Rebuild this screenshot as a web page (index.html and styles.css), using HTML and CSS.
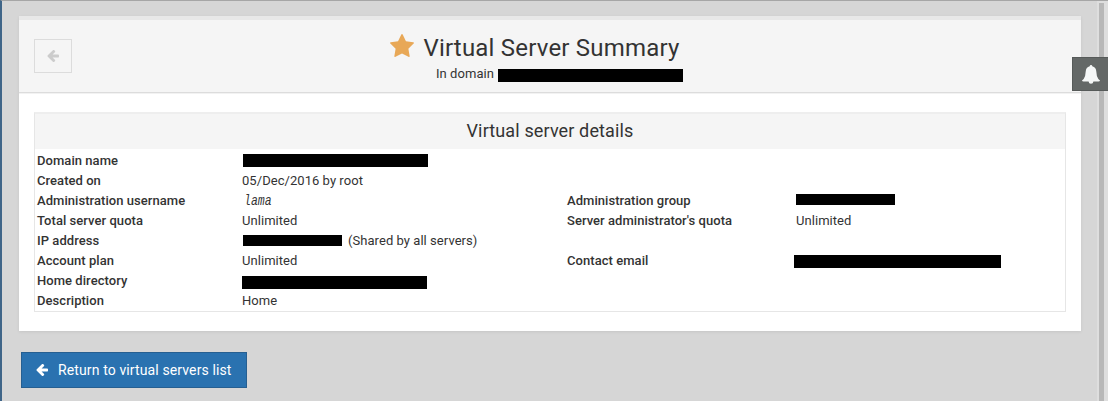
FILE: index.html
```html
<!DOCTYPE html>
<html lang="en">
<head>
<meta charset="utf-8">
<title>Virtual Server Summary</title>
<link rel="stylesheet" href="styles.css">
</head>
<body>
<svg class="defs" width="0" height="0"><symbol id="arrow" viewBox="0 0 1536 1536"><path fill="currentColor" d="M1536 704v128q0 53-32.5 90.5t-84.5 37.5h-704l293 294q38 36 38 90t-38 90l-75 76q-37 37-90 37-52 0-91-37l-651-652q-37-37-37-90 0-52 37-91l651-650q38-38 91-38 52 0 90 38l75 74q38 38 38 91t-38 91l-293 293h704q52 0 84.5 37.5t32.5 90.5z"/></symbol></svg>
<main class="content">
  <section class="panel">
    <header class="panel-head">
      <button class="back" aria-label="Back"><svg class="arrow"><use href="#arrow"/></svg></button>
      <div class="heading">
        <h1><svg class="star" viewBox="64 31 1664 1590" preserveAspectRatio="none"><path fill="#e8a857" d="M1728 647q0 22-26 48l-363 354 86 500q1 7 1 20 0 21-10.5 35.5t-30.5 14.5q-19 0-40-12l-449-236-449 236q-22 12-40 12-21 0-31.5-14.5t-10.5-35.5q0-6 2-20l86-500-364-354q-25-27-25-48 0-37 56-46l502-73 225-455q19-41 49-41t49 41l225 455 502 73q56 9 56 46z"/></svg><span class="title">Virtual Server Summary</span></h1>
        <p class="domain"><span class="domain-label">In domain</span><i class="redacted r-title"></i></p>
      </div>
    </header>
    <div class="details">
      <h2>Virtual server details</h2>
      <dl class="grid">
        <dt>Domain name</dt><dd class="wide"><i class="redacted r-domain"></i></dd>
        <dt>Created on</dt><dd class="wide">05/Dec/2016 by root</dd>
        <dt>Administration username</dt><dd><code>lama</code></dd>
        <dt>Administration group</dt><dd><i class="redacted r-group"></i></dd>
        <dt>Total server quota</dt><dd>Unlimited</dd>
        <dt>Server administrator's quota</dt><dd>Unlimited</dd>
        <dt>IP address</dt><dd class="wide"><i class="redacted r-ip"></i><span class="shared">(Shared by all servers)</span></dd>
        <dt>Account plan</dt><dd>Unlimited</dd>
        <dt>Contact email</dt><dd><i class="redacted r-email"></i></dd>
        <dt>Home directory</dt><dd class="wide"><i class="redacted r-home"></i></dd>
        <dt>Description</dt><dd class="wide">Home</dd>
      </dl>
    </div>
  </section>
  <button class="return"><svg class="arrow"><use href="#arrow"/></svg><span>Return to virtual servers list</span></button>
</main>
<div class="scrollbar"><div class="thumb"></div></div>
<div class="bell"><svg width="18" height="19" viewBox="0 0 18 19"><path fill="#f5f7f7" d="M9 0Q10.2 0 10.3 1.3Q14 2.2 14.3 6.5Q14.5 11.5 16.2 13.7Q17 14.8 18 15.2Q17.8 16.5 16.5 16.5H11.4Q11.2 18.8 9 18.8T6.6 16.5H1.5Q.2 16.5 0 15.2Q1 14.8 1.8 13.7Q3.5 11.5 3.7 6.5Q4 2.2 7.7 1.3Q7.8 0 9 0Z"/></svg></div>
</body>
</html>
```
FILE: styles.css
```css
* { box-sizing: border-box; }
body {
  margin: 0;
  height: 401px;
  overflow: hidden;
  display: flex;
  background: #d6d6d6;
  border-top: 1px solid #a6a6a6;
  border-left: 2px solid #3f6588;
  font-family: Roboto, "Liberation Sans", sans-serif;
  font-size: 13px;
  letter-spacing: .05px;
  color: #333;
}
.defs { position: absolute; }
.content { flex: 1; padding: 15px 16px 0 17px; }
.panel {
  height: 315px;
  background: #fff;
  border-top: 4px solid #e8e8e8;
  box-shadow: 0 1px 3px rgba(0, 0, 0, .08);
}
.panel-head {
  height: 73px;
  display: grid;
  grid-template-columns: 38px 1fr 38px;
  padding: 0 15px;
  background: #f5f5f5;
  border-bottom: 1px solid #dcdcdc;
  box-shadow: 0 1px 0 #f2f2f2;
}
.back {
  width: 38px;
  height: 34px;
  margin-top: 19px;
  padding: 0;
  display: flex;
  align-items: center;
  justify-content: center;
  background: #f5f5f5;
  border: 1px solid #dcdcdc;
  color: #ccc;
}
.arrow { width: 12px; height: 12px; display: block; }
.heading { display: flex; flex-direction: column; align-items: center; }
h1 {
  margin: 14px 0 0;
  height: 28px;
  display: flex;
  align-items: flex-start;
  gap: 9px;
  font-size: 24px;
  line-height: 28px;
  letter-spacing: .2px;
  font-weight: 400;
  padding-right: 30px;
}
.star { width: 24px; height: 23px; }
.title { white-space: nowrap; }
.domain { margin: 3px 0 0; padding-left: 19px; display: flex; line-height: 18px; }
.redacted { display: block; background: #000; flex: none; }
.r-title { width: 185px; height: 13px; margin: 4px 0 0 4px; }
.details { margin: 19px 15px 0; height: 200px; border: 1px solid #e6e6e6; border-top: 2px solid #eee; }
h2 {
  margin: 0;
  height: 35px;
  background: #f5f5f5;
  font-size: 18px;
  line-height: 34px;
  letter-spacing: .13px;
  font-weight: 400;
  text-align: center;
}
.grid {
  margin: 2px 0 0;
  padding-left: 2px;
  display: grid;
  grid-template-columns: 205px 325px 229px 1fr;
  grid-auto-rows: 20px;
  line-height: 20px;
}
dt { font-weight: 500; white-space: nowrap; }
dd { margin: 0; display: flex; white-space: nowrap; }
.wide { grid-column: span 3; }
code {
  font: italic 11.5px/20px "Liberation Mono", monospace;
  letter-spacing: 0;
  margin-left: 2px;
  transform: scaleY(1.25);
}
.r-domain { width: 185px; height: 13px; margin: 3px 0 0 1px; }
.r-group { width: 99px; height: 11px; margin-top: 3px; }
.r-ip { width: 99px; height: 11px; margin: 4px 0 0 1px; }
.r-email { width: 207px; height: 13px; margin: 4px 0 0 -2px; }
.r-home { width: 185px; height: 13px; margin-top: 5px; }
.shared { margin-left: 6px; }
.return {
  margin: 21px 0 0 2px;
  width: 226px;
  height: 36px;
  padding: 0 0 0 14px;
  display: flex;
  align-items: center;
  gap: 10px;
  background: #2a72b0;
  border: 1px solid #265f91;
  color: #fff;
  font: 14px/20px Roboto, "Liberation Sans", sans-serif;
  letter-spacing: .12px;
  white-space: nowrap;
}
.scrollbar { width: 11px; background: #dedede; padding: 2px 4px 0 2px; }
.thumb { height: 100%; background: #b8b8b8; }
.bell {
  position: absolute;
  right: 0;
  top: 57px;
  width: 36px;
  height: 34px;
  padding: 7px 0 0 9px;
  background: #646867;
  border: 1px solid #565a59;
  border-right: 0;
}
```
